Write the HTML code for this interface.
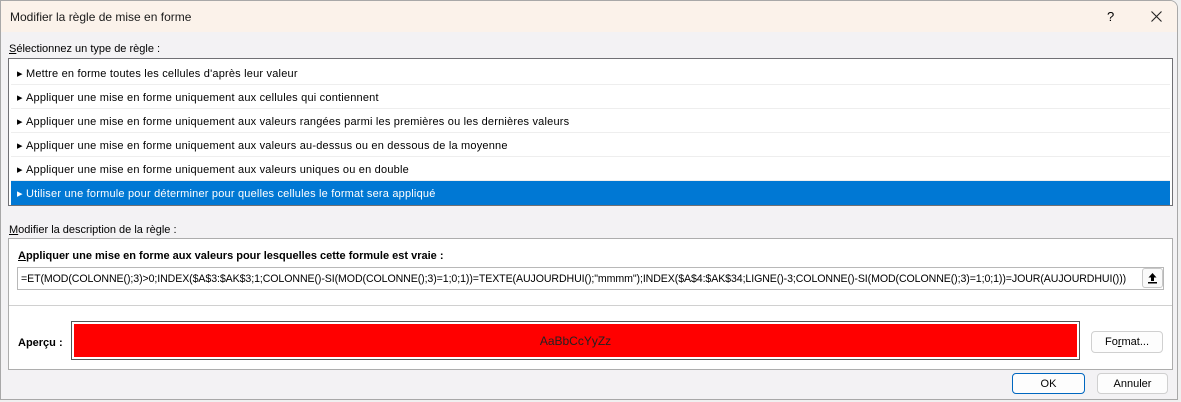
<!DOCTYPE html>
<html><head><meta charset="utf-8"><style>
*{margin:0;padding:0;box-sizing:border-box}
body{width:1181px;height:402px;overflow:hidden;background:#f0f0f0;font-family:"Liberation Sans",sans-serif;font-size:11px;color:#000;position:relative}
.dlg{position:absolute;left:0;top:0;width:1178px;height:400px;background:#f3f2f4;border:1px solid #a8a8a8;border-radius:0 8px 0 0;overflow:hidden}
.title{position:absolute;left:0;top:0;width:100%;height:31px;background:#fbf2ea}
.title span{position:absolute;left:9px;top:9px;font-size:12px;color:#1a1a1a}
.abs{position:absolute}
.list{left:7px;top:57px;width:1165px;height:148px;border:1px solid #707074;background:#fff}
.row{position:absolute;left:2px;width:1159px;height:24px;border-bottom:1px solid #eeeeee;padding:6px 0 0 6px;white-space:nowrap;letter-spacing:0.2px}
.row.sel{background:#0078d4;color:#fff;border:none}
.desc{left:7px;top:237px;width:1165px;height:132px;border:1px solid #adadad;background:#fff}
.field{left:8px;top:28px;width:1147px;height:23px;border:1px solid #b8b8b8;background:#fff;padding:5px 0 0 3px;white-space:nowrap;font-size:10.6px;letter-spacing:-0.09px;overflow:hidden}
.btn{position:absolute;background:#fdfdfd;border:1px solid #d0d0d0;border-radius:4px;text-align:center;padding-top:4px;font-size:11px}
</style></head><body>
<div class="dlg">
<div class="title"><span>Modifier la règle de mise en forme</span>
<div class="abs" style="left:1106px;top:8px;font-size:13px">?</div>
<svg class="abs" style="left:1150px;top:10px" width="11" height="11"><path d="M0.5 0.5L10.5 10.5M10.5 0.5L0.5 10.5" stroke="#222" stroke-width="1.1"/></svg>
</div>
<div class="abs" style="left:8px;top:42px"><u>S</u>électionnez un type de règle :</div>
<div class="abs list">
<div class="row" style="top:2px">▸&nbsp;Mettre en forme toutes les cellules d'après leur valeur</div>
<div class="row" style="top:26px">▸&nbsp;Appliquer une mise en forme uniquement aux cellules qui contiennent</div>
<div class="row" style="top:50px">▸&nbsp;Appliquer une mise en forme uniquement aux valeurs rangées parmi les premières ou les dernières valeurs</div>
<div class="row" style="top:74px">▸&nbsp;Appliquer une mise en forme uniquement aux valeurs au-dessus ou en dessous de la moyenne</div>
<div class="row" style="top:98px">▸&nbsp;Appliquer une mise en forme uniquement aux valeurs uniques ou en double</div>
<div class="row sel" style="top:122px">▸&nbsp;Utiliser une formule pour déterminer pour quelles cellules le format sera appliqué</div>
</div>
<div class="abs" style="left:8px;top:223px"><u>M</u>odifier la description de la règle :</div>
<div class="abs desc">
<div class="abs" style="left:9px;top:11px;font-weight:bold"><u>A</u>ppliquer une mise en forme aux valeurs pour lesquelles cette formule est vraie :</div>
<div class="abs field">=ET(MOD(COLONNE();3)&gt;0;INDEX($A$3:$AK$3;1;COLONNE()-SI(MOD(COLONNE();3)=1;0;1))=TEXTE(AUJOURDHUI();"mmmm");INDEX($A$4:$AK$34;LIGNE()-3;COLONNE()-SI(MOD(COLONNE();3)=1;0;1))=JOUR(AUJOURDHUI()))</div>
<div class="abs" style="left:1133px;top:29px;width:21px;height:20px;border:1px solid #c8c8c8;border-radius:3px;background:#fafafa">
<svg width="19" height="18"><path d="M9.5 4L5.5 8.5H8V12H11V8.5H13.5Z" fill="#000"/><rect x="5" y="13" width="9" height="1.5" fill="#000"/></svg></div>
<div class="abs" style="left:0;top:66px;width:1163px;height:1px;background:#d0d0d0"></div>
<div class="abs" style="left:9px;top:98px;font-weight:bold">Aperçu :</div>
<div class="abs" style="left:62px;top:82px;width:1009px;height:39px;border:1px solid #555;padding:2px"><div style="background:#ff0000;width:100%;height:100%;text-align:center;padding-top:10px;font-size:12px;color:#222">AaBbCcYyZz</div></div>
<div class="btn" style="left:1082px;top:92px;width:72px;height:22px">Fo<u>r</u>mat...</div>
</div>
<div class="btn" style="left:1011px;top:372px;width:73px;height:21px;border-color:#0067c0">OK</div>
<div class="btn" style="left:1096px;top:372px;width:71px;height:21px">Annuler</div>
</div>
</body></html>
